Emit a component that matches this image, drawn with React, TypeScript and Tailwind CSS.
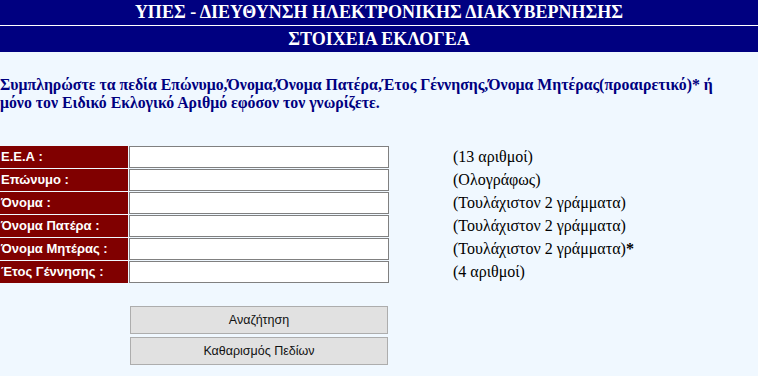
const rows = [
  { label: 'Ε.Ε.Α :', hint: '(13 αριθμοί)', star: false },
  { label: 'Επώνυμο :', hint: '(Ολογράφως)', star: false },
  { label: 'Όνομα :', hint: '(Τουλάχιστον 2 γράμματα)', star: false },
  { label: 'Όνομα Πατέρα :', hint: '(Τουλάχιστον 2 γράμματα)', star: false },
  { label: 'Όνομα Μητέρας :', hint: '(Τουλάχιστον 2 γράμματα)', star: true },
  { label: 'Έτος Γέννησης :', hint: '(4 αριθμοί)', star: false },
]

export default function App() {
  return (
    <div className="w-[758px] h-[376px] bg-[#f0f8ff] overflow-hidden font-['Liberation_Serif',serif]">
      <div className="h-[25px] bg-[#000080] text-white font-bold text-[18px] flex items-center justify-center">
        ΥΠΕΣ - ΔΙΕΥΘΥΝΣΗ ΗΛΕΚΤΡΟΝΙΚΗΣ ΔΙΑΚΥΒΕΡΝΗΣΗΣ
      </div>
      <div className="h-px bg-white" />
      <div className="h-[26px] bg-[#000080] text-white font-bold text-[18px] flex items-center justify-center">
        ΣΤΟΙΧΕΙΑ ΕΚΛΟΓΕΑ
      </div>

      <p className="mt-[24px] text-[#000080] font-bold text-[15.8px] leading-[18px]">
        Συμπληρώστε τα πεδία Επώνυμο,Όνομα,Όνομα Πατέρα,Έτος Γέννησης,Όνομα Μητέρας(προαιρετικό)* ή
        <br />
        μόνο τον Ειδικό Εκλογικό Αριθμό εφόσον τον γνωρίζετε.
      </p>

      <div className="mt-[34px] flex flex-col gap-px">
        {rows.map((r) => (
          <div key={r.label} className="flex items-center h-[22px]">
            <div className="w-[128px] h-full bg-[#800000] text-white font-bold text-[13px] font-['Liberation_Sans',sans-serif] flex items-center pl-px">
              {r.label}
            </div>
            <input
              type="text"
              className="ml-px w-[260px] h-full bg-white border border-[#808080] outline-none"
            />
            <div className="ml-[64px] text-[16px] text-black">
              {r.hint}
              {r.star && <b>*</b>}
            </div>
          </div>
        ))}
      </div>

      <div className="mt-[23px] ml-[130px] w-[258px] flex flex-col gap-[3px] font-['Liberation_Sans',sans-serif] text-[12.5px] text-[#111]">
        <button className="h-[28px] bg-[#e1e1e1] border border-[#adadad]">Αναζήτηση</button>
        <button className="h-[28px] bg-[#e1e1e1] border border-[#adadad]">Καθαρισμός Πεδίων</button>
      </div>
    </div>
  )
}
